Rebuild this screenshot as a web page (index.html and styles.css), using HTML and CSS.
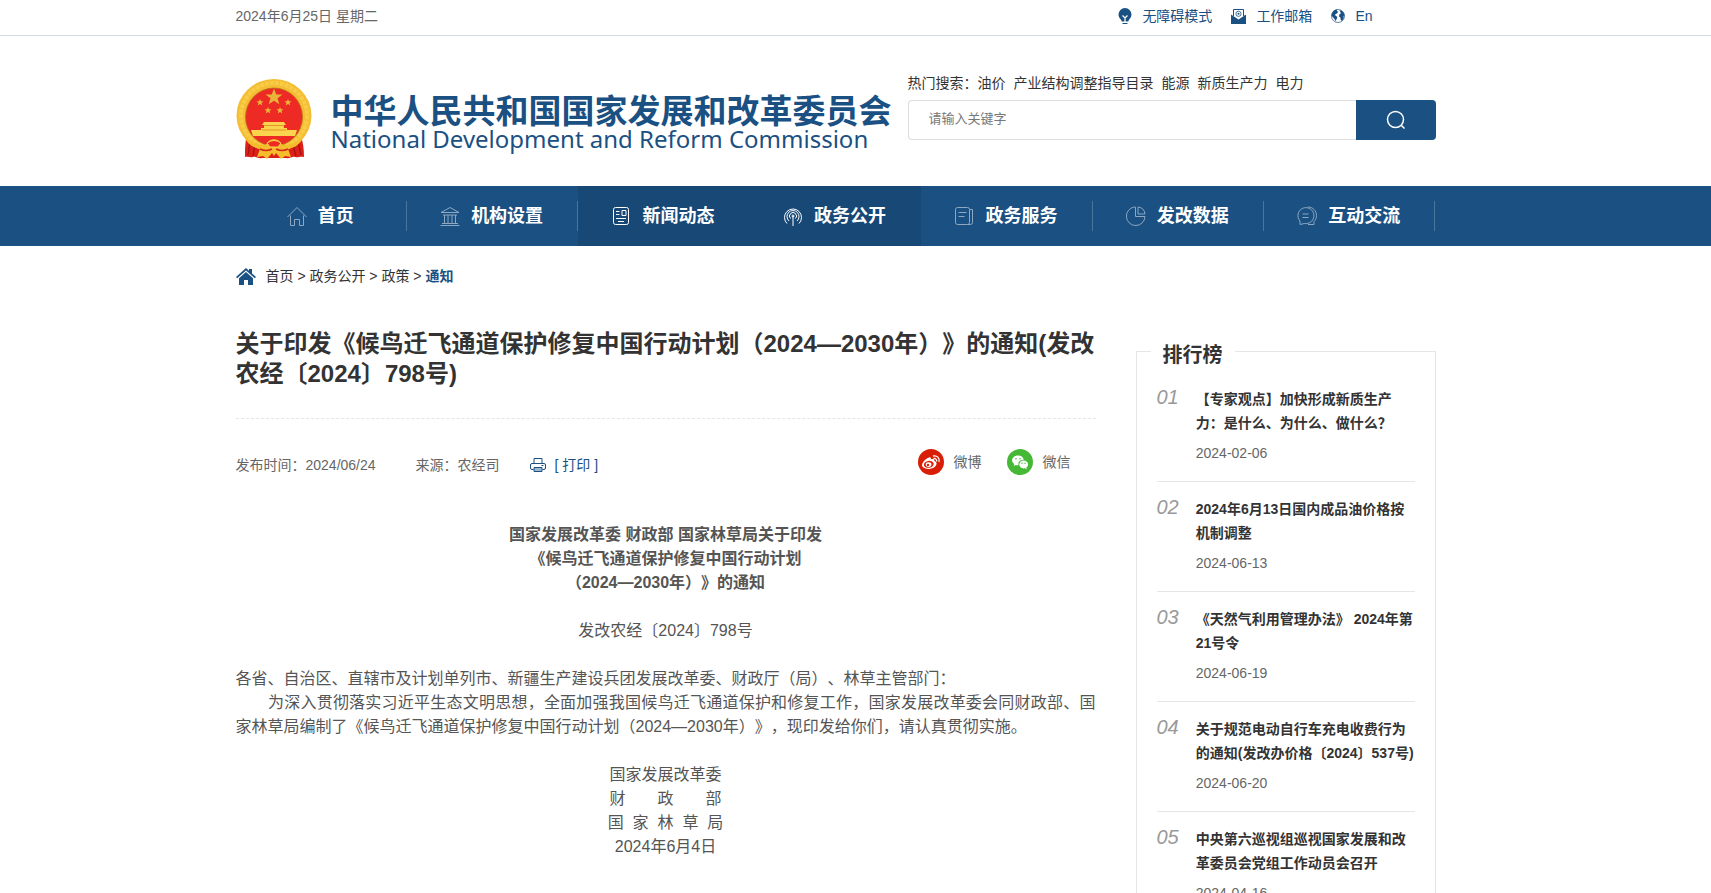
FILE: index.html
```html
<!DOCTYPE html>
<html lang="zh-CN">
<head>
<meta charset="utf-8">
<title>关于印发《候鸟迁飞通道保护修复中国行动计划（2024—2030年）》的通知</title>
<link rel="stylesheet" href="styles.css">
</head>
<body>
<div class="topbar">
  <div class="wrap topbar-row">
    <span class="date">2024年6月25日 星期二</span>
    <nav class="tools">
      <a href="#"><svg width="14" height="16" viewBox="0 0 14 16"><path fill="#1b5082" d="M7 0a6.500 6.500 0 0 1 6.500 6.500c0 2.400-1.300 3.800-2.300 5-.5.6-.8 1.500-.9 2H3.700c-.1-.5-.4-1.400-.9-2-1-1.200-2.300-2.600-2.300-5A6.500 6.500 0 0 1 7 0z"/><path d="M4.500 7.500 7 10l2.500-2.500M7 10v4" fill="none" stroke="#fff" stroke-width="1.200"/><path fill="#1b5082" d="M4.500 15h5v1h-5z"/></svg>无障碍模式</a>
      <a href="#"><svg width="15" height="15" viewBox="0 0 15 15"><path d="M2.500 7V.5h10V7" fill="#fff" stroke="#1b5082"/><path fill="#1b5082" d="M0 5.500 7.500 10.500 15 5.500V15H0z"/><circle cx="7.500" cy="4.800" r="2.600" fill="none" stroke="#1b5082" stroke-width=".8"/><circle cx="7.500" cy="4.800" r="1" fill="#1b5082"/></svg>工作邮箱</a>
      <a href="#"><svg width="14" height="14" viewBox="0 0 14 14"><circle cx="7" cy="7" r="6.500" fill="#fff" stroke="#1b5082" stroke-width=".7"/><path fill="#1b5082" d="M1.800 3C3 1.200 4.800.5 6.200.6L5.800 2l1.400.8L6 4.500 4.200 5.200l.3 1.600 1.800 1L5.800 10l-1 1.200v1.600L3.500 10 1.300 7.500.6 6.500C.7 5 1.200 3.900 1.800 3zM8.500 1c2.800.4 4.700 2.700 5 5.500l-1 .5.3 2-1.800 3-1.300-1-.2-2.500-1.500-1L8.500 5l1.500-.5L9.300 3z"/></svg>En</a>
    </nav>
  </div>
</div>

<header class="header">
  <div class="wrap header-row">
    <a class="brand" href="#">
      <svg class="emblem" width="76" height="80" viewBox="0 0 76 80">
        <path fill="#dc1f1a" d="M11 54C9 64 9 71 9 78c3-1 5 1 8 0s5 2 9 1h24c4 1 6-2 9-1s5-1 9 0c0-8-1-16-4-24z"/>
        <path d="M14 62l-2 14M19 66l-2 11M57 66l3 11M62 62l3 14" stroke="#a3120f" stroke-width="1.200"/>
        <ellipse cx="38" cy="36.500" rx="37.500" ry="36.500" fill="#f4bd33"/>
        <ellipse cx="38" cy="36.500" rx="33" ry="32.500" fill="none" stroke="#f9cc47" stroke-width="4" stroke-dasharray="4 1"/>
        <ellipse cx="38" cy="38" rx="28.500" ry="29" fill="#ed2a24" stroke="#b8741c" stroke-width=".8"/>
        <path fill="#e9b43a" d="m38 9.500 2.200 6h6.300L41.500 19.200l1.800 6L38 21.700l-5.300 3.500 1.800-6-5-3.700h6.300z"/>
        <g fill="#e9b43a"><path d="m24 20 1 2.300h2.500l-2 1.600.8 2.500L24 25l-2.300 1.400.8-2.500-2-1.600H23z"/><path d="m52 20 1 2.300h2.500l-2 1.600.8 2.500L52 25l-2.300 1.400.8-2.500-2-1.600H51zM32 28l1 2.300h2.500l-2 1.600.8 2.500L32 33l-2.300 1.400.8-2.500-2-1.600H31zM44 28l1 2.300h2.500l-2 1.600.8 2.500L44 33l-2.300 1.400.8-2.500-2-1.600H43z"/></g>
        <path fill="#fbd34c" d="M28 43h20l2 3h-2v3h3v2h10l-2 6H17l-2-6h10v-2h3v-3h-2z"/>
        <path d="M28 46.500h20M26 51h24" stroke="#d98a1a" stroke-width=".8"/>
        <path fill="#f5bc2c" d="M8 54c4 8 12 12 20 12 3 0 4-4 6-5l4-1 4 1c2 1 3 5 6 5 8 0 16-4 20-12l-2 7c-4 6-9 8-14 9l3 8-6-1-4 3-5-6-2 3-2-3-5 6-4-3-6 1 3-8c-5-1-10-3-14-9z"/>
        <path d="M31 64q7-5 14 0l-3 4h-8z" fill="#ed2a24" stroke="#fbd552"/>
        <path d="M24 70c4 2 8 2 12 0M40 70c4 2 8 2 12 0" fill="none" stroke="#d5291e" stroke-width="1.500"/>
      </svg>
      <span class="brand-text"><span class="brand-cn">中华人民共和国国家发展和改革委员会</span><span class="brand-en">National Development and Reform Commission</span></span>
    </a>
    <div class="search">
      <p class="hot"><span>热门搜索：</span><a href="#">油价</a><a href="#">产业结构调整指导目录</a><a href="#">能源</a><a href="#">新质生产力</a><a href="#">电力</a></p>
      <form class="search-form">
        <input type="text" placeholder="请输入关键字" aria-label="请输入关键字">
        <button type="button" aria-label="搜索"><svg width="20" height="20" viewBox="0 0 20 20" fill="none" stroke="#fff" stroke-width="1.500"><circle cx="9.500" cy="9.500" r="8"/><path d="m15 15 3.500 3.500"/></svg></button>
      </form>
    </div>
  </div>
</header>

<nav class="mainnav">
  <div class="wrap mainnav-row">
    <a href="#"><svg class="dim" viewBox="0 0 22 22"><path d="M1.500 12 11 2.500l9.500 9.500M4.500 10.500v10h4v-6h5v6h4v-10"/></svg>首页</a>
    <a href="#"><svg class="dim" viewBox="0 0 22 22"><path d="M2 7.500 11 2.500l9 5zM4 10h14M5.500 10v8.500M9 10v8.500M13 10v8.500M16.500 10v8.500M3 18.500h16M1.500 20.500h19"/></svg>机构设置</a>
    <a class="on" href="#"><svg viewBox="0 0 22 22"><rect x="2.500" y="2.500" width="15" height="17" rx="2"/><path d="M5 6.500h3.500M5 9.500h3.500M11 5.500h4v5h-4zM5 13.500h10M7 16.500h6"/></svg>新闻动态</a>
    <a class="on" href="#"><svg viewBox="0 0 22 22"><path d="M11 11v10M5 18.500a8.500 8.500 0 1 1 12 0M7 16a6 6 0 1 1 8 0M8.500 13.500a3.500 3.500 0 1 1 5 0"/><circle cx="11" cy="11" r="1"/></svg>政务公开</a>
    <a href="#"><svg class="dim" viewBox="0 0 22 22"><rect x="2.500" y="2.500" width="14" height="17" rx="2"/><path d="M5.500 7.500h8M5.500 11.500h6M17 4.500h2.500v13q0 2-2 2h-3"/></svg>政务服务</a>
    <a href="#"><svg class="dim" viewBox="0 0 22 22"><path d="M9.500 2A9.300 9.300 0 1 0 20 11.500h-9.500V2zM13 2v7h7a8 8 0 0 0-7-7z"/></svg>发改数据</a>
    <a href="#"><svg class="dim" viewBox="0 0 22 22"><path d="M4 19.500v-3.500a8 8 0 1 1 4.500 2.500zM12 2c5 0 8.500 4 8.500 8.500 0 3-1.200 4.800-2.500 6v3h-6M6.500 9h6M6.500 12.500h6"/></svg>互动交流</a>
  </div>
</nav>

<main class="content">
  <div class="wrap">
    <nav class="crumbs">
      <svg width="20" height="17" viewBox="0 0 20 17" fill="#1b5082"><path d="M10 0 13 2.700V1h3v4.500L20 9l-1.200 1.300L10 2.500l-8.800 7.800L0 9z"/><path d="m10 4 7 6.200V17h-5v-5H8v5H3v-6.800z"/></svg>
      <span><a href="#">首页</a> &gt; <a href="#">政务公开</a> &gt; <a href="#">政策</a> &gt; <a class="here" href="#">通知</a></span>
    </nav>
    <div class="columns">
      <article class="article">
        <h1>关于印发《候鸟迁飞通道保护修复中国行动计划（2024—2030年）》的通知(发改农经〔2024〕798号)</h1>
        <div class="meta">
          <span>发布时间：2024/06/24</span>
          <span class="source">来源：农经司</span>
          <a class="print" href="#"><svg width="16" height="16" viewBox="0 0 16 16" fill="none" stroke="#1b5082"><path d="M4 6.500v-5h8v5M3.500 12.500H2q-1.500 0-1.500-1.500V8Q.5 6.500 2 6.500h12q1.500 0 1.500 1.500v3q0 1.500-1.500 1.500h-1.500"/><path fill="#9db7cf" d="M4 10.500h8v4H4z"/><path d="M11.500 8.500h2"/></svg>[ 打印 ]</a>
          <div class="share">
            <a href="#"><svg width="26" height="26" viewBox="0 0 26 26"><circle cx="13" cy="13" r="13" fill="#d81e06"/><path fill="#fff" d="M11 8.500c1.500-.6 2.300.3 1.800 2 2-.8 4-.6 3.600 1.500 2.800 1 2.600 3.500 1 5.300-3 3.300-10.500 3.600-13 .2C2.700 14.500 7.500 9.700 11 8.500z"/><ellipse cx="10.800" cy="15.300" rx="5" ry="3.400" fill="#d81e06" transform="rotate(-8 10.800 15.300)"/><ellipse cx="10.600" cy="15.600" rx="2.900" ry="2.400" fill="#fff"/><circle cx="10" cy="16" r="1.200" fill="#d81e06"/><path d="M15 7c4-1 7 2 6 6M15.500 9.500c2-.4 3.600 1 3 3" fill="none" stroke="#fff" stroke-width="1.300"/></svg>微博</a>
            <a href="#"><svg width="26" height="26" viewBox="0 0 26 26"><circle cx="13" cy="13" r="13" fill="#45b935"/><path fill="#fff" d="M11 6.500c3.300 0 5.500 2 5.800 4.300-3.500 0-6 2.300-5.300 5.400-.9.100-1.800 0-2.600-.3L6.700 17l.6-2C3 12 5.500 6.500 11 6.500z"/><path fill="#fff" d="M16.500 11.500c5 .2 6 5.200 2.800 7.200l.4 1.600-1.800-1c-3.400.6-5.600-1.300-5.600-3.700 0-2.300 2-4.100 4.200-4.100z"/><g fill="#45b935"><circle cx="9" cy="9.700" r=".8"/><circle cx="13" cy="9.700" r=".8"/><circle cx="15" cy="14.300" r=".7"/><circle cx="18" cy="14.300" r=".7"/></g></svg>微信</a>
          </div>
        </div>
        <div class="body">
          <p class="center"><strong>国家发展改革委 财政部 国家林草局关于印发<br>《候鸟迁飞通道保护修复中国行动计划<br>（2024—2030年）》的通知</strong></p>
          <p class="center">发改农经〔2024〕798号</p>
          <p>各省、自治区、直辖市及计划单列市、新疆生产建设兵团发展改革委、财政厅（局）、林草主管部门：<br>　　为深入贯彻落实习近平生态文明思想，全面加强我国候鸟迁飞通道保护和修复工作，国家发展改革委会同财政部、国家林草局编制了《候鸟迁飞通道保护修复中国行动计划（2024—2030年）》，现印发给你们，请认真贯彻实施。</p>
          <p class="center">国家发展改革委<br>财　　政　　部<br>国&nbsp;&nbsp;家&nbsp;&nbsp;林&nbsp;&nbsp;草&nbsp;&nbsp;局<br>2024年6月4日</p>
        </div>
      </article>
      <aside class="rank">
        <h2>排行榜</h2>
        <ol>
          <li><em>01</em><div><a href="#">【专家观点】加快形成新质生产力：是什么、为什么、做什么？</a><time>2024-02-06</time></div></li>
          <li><em>02</em><div><a href="#">2024年6月13日国内成品油价格按机制调整</a><time>2024-06-13</time></div></li>
          <li><em>03</em><div><a href="#">《天然气利用管理办法》 2024年第21号令</a><time>2024-06-19</time></div></li>
          <li><em>04</em><div><a href="#">关于规范电动自行车充电收费行为的通知(发改办价格〔2024〕537号)</a><time>2024-06-20</time></div></li>
          <li><em>05</em><div><a href="#">中央第六巡视组巡视国家发展和改革委员会党组工作动员会召开</a><time>2024-04-16</time></div></li>
        </ol>
      </aside>
    </div>
  </div>
</main>
</body>
</html>
```
FILE: styles.css
```css
* { box-sizing: border-box; }
html { overflow: hidden; height: 100%; }
body {
  margin: 0;
  height: 100%;
  overflow: hidden;
  background: #fff;
  color: #333;
  font: 14px/20px "Liberation Sans", "Noto Sans CJK SC", sans-serif;
  text-spacing-trim: space-all;
}
a { color: inherit; text-decoration: none; }
h1, h2, p, ol { margin: 0; padding: 0; }
svg { flex: none; }

.topbar, .header, .mainnav, .content {
  display: flex;
  justify-content: center;
  padding-right: 40px;
}
.wrap { width: 100%; max-width: 1200px; }

.topbar { border-bottom: 1px solid #d0dce4; }
.topbar-row { display: flex; justify-content: space-between; align-items: center; height: 35px; padding-bottom: 3px; color: #666; }
.tools { display: flex; gap: 19px; padding-right: 63px; color: #1b5082; }
.tools a { display: flex; align-items: center; gap: 10px; }

.header-row { display: flex; justify-content: space-between; height: 150px; }
.brand { display: flex; gap: 19px; padding-top: 43px; }
.brand-text { display: flex; flex-direction: column; padding-top: 16px; color: #1b5082; white-space: nowrap; }
.brand-cn { font-size: 33px; line-height: 34px; font-weight: 700; }
.brand-en { font-family: "Noto Sans", sans-serif; font-size: 24px; line-height: 20px; }
.search { width: 528px; padding-top: 37px; }
.hot { display: flex; gap: 8px; line-height: 20px; }
.hot span { margin-right: -8px; }
.search-form { display: flex; margin-top: 7px; height: 40px; }
.search-form input {
  flex: 1;
  min-width: 0;
  border: 1px solid #ddd;
  border-right: 0;
  border-radius: 4px 0 0 4px;
  padding: 0 20px 2px;
  font: inherit;
  font-size: 13px;
}
.search-form input::placeholder { color: #777; }
.search-form button {
  display: flex;
  align-items: center;
  justify-content: center;
  width: 80px;
  padding: 0;
  border: 0;
  border-radius: 0 4px 4px 0;
  background: #1b5082;
}

.mainnav { background: #1b5082; }
.mainnav-row { display: flex; }
.mainnav a {
  display: flex;
  flex: 1;
  align-items: center;
  justify-content: center;
  gap: 10px;
  height: 60px;
  padding-right: 3px;
  color: #fff;
  font-size: 18px;
  font-weight: 700;
  background: linear-gradient(#4a759c, #4a759c) right center / 1px 30px no-repeat;
}
.mainnav .on { background: #174876; }
.mainnav svg { width: 22px; height: 22px; fill: none; stroke: #fff; }
.mainnav .dim { opacity: .5; }

.crumbs { display: flex; align-items: center; gap: 10px; height: 60px; }
.here { color: #1b5082; font-weight: 700; }

.columns { display: flex; justify-content: space-between; gap: 40px; }
.article { flex: 1; min-width: 0; padding-top: 23px; }
.article h1 { padding-bottom: 29px; border-bottom: 1px dashed #e5e5e5; font-size: 24px; line-height: 30px; }
.meta { display: flex; align-items: flex-end; height: 26px; margin-top: 30px; color: #666; }
.source { margin-left: 40px; }
.print { display: flex; align-items: center; gap: 9px; margin-left: 30px; color: #1b5082; }
.share { display: flex; gap: 25px; margin-left: auto; padding-right: 25px; }
.share a { display: flex; align-items: center; gap: 10px; }
.body { margin-top: 48px; color: #555; font-size: 16px; line-height: 24px; text-align: justify; }
.body p + p { margin-top: 24px; }
.body .center { text-align: center; }

.rank { position: relative; width: 300px; margin-top: 45px; padding: 20px; border: 1px solid #e6e6ea; }
.rank h2 { position: absolute; top: -12px; left: 14px; padding: 0 12px; background: #fff; font-size: 20px; line-height: 30px; }
.rank ol { list-style: none; }
.rank li { display: flex; gap: 17px; padding: 15px 0 16px; border-bottom: 1px solid #e6e6e6; line-height: 24px; }
.rank em { color: #999; font-size: 20px; line-height: 20px; }
.rank div { flex: 1; min-width: 0; }
.rank li a { display: block; font-weight: 700; }
.rank time { display: block; margin-top: 6px; color: #666; }
```
